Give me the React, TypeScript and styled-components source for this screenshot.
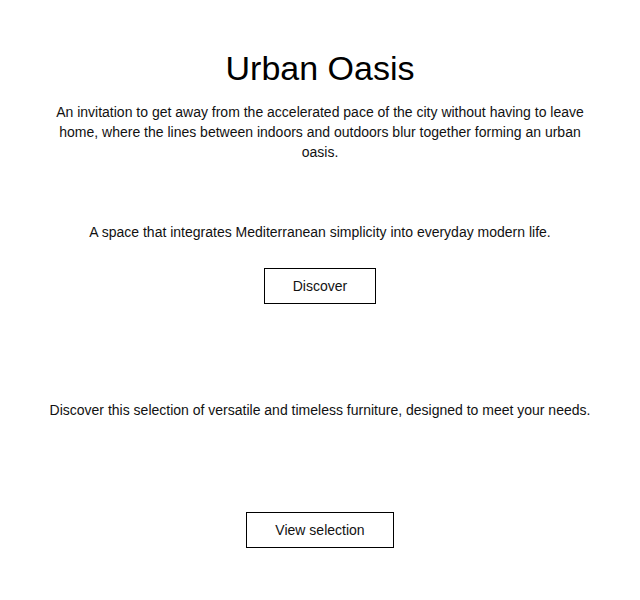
import React from "react";
import styled, { createGlobalStyle } from "styled-components";

const Global = createGlobalStyle`
  html, body { margin: 0; padding: 0; background: #ffffff; }
  body { font-family: "Liberation Sans", Arial, sans-serif; color: #111; }
`;

const Page = styled.main`
  display: flex;
  flex-direction: column;
  align-items: center;
  padding: 50px 40px 0;
  text-align: center;
`;

const Section = styled.section<{ $top: number }>`
  display: flex;
  flex-direction: column;
  align-items: center;
  margin-top: ${(p) => p.$top}px;
`;

const Title = styled.h1`
  margin: 0;
  font-size: 34px;
  font-weight: 400;
  line-height: 37px;
  color: #000;
`;

const Text = styled.p<{ $top?: number }>`
  margin: ${(p) => p.$top ?? 0}px 0 0;
  font-size: 14px;
  line-height: 20px;
  color: #111;
`;

const Button = styled.button<{ $top: number; $width: number }>`
  margin-top: ${(p) => p.$top}px;
  width: ${(p) => p.$width}px;
  height: 36px;
  border: 1px solid #000;
  background: #fff;
  font-family: "Liberation Sans", Arial, sans-serif;
  font-size: 14px;
  color: #111;
  cursor: pointer;
`;

export default function App() {
  return (
    <>
      <Global />
      <Page>
        <Section $top={0}>
          <Title>Urban Oasis</Title>
          <Text $top={15}>
            An invitation to get away from the accelerated pace of the city without having to leave
            home, where the lines between indoors and outdoors blur together forming an urban oasis.
          </Text>
        </Section>
        <Section $top={60}>
          <Text>A space that integrates Mediterranean simplicity into everyday modern life.</Text>
          <Button $top={26} $width={112}>Discover</Button>
        </Section>
        <Section $top={96}>
          <Text>Discover this selection of versatile and timeless furniture, designed to meet your needs.</Text>
          <Button $top={92} $width={148}>View selection</Button>
        </Section>
      </Page>
    </>
  );
}
